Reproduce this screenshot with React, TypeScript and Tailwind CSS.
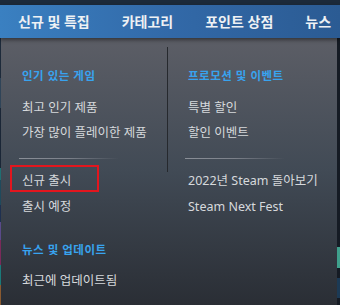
const font = { fontFamily: '"Noto Sans", "Noto Sans CJK KR", sans-serif' };

interface Column {
  title: string;
  top: string[];
  bottom: string[];
  extra?: { title: string; items: string[] };
}

const leftCol: Column = {
  title: '인기 있는 게임',
  top: ['최고 인기 제품', '가장 많이 플레이한 제품'],
  bottom: ['신규 출시', '출시 예정'],
  extra: { title: '뉴스 및 업데이트', items: ['최근에 업데이트됨'] },
};

const rightCol: Column = {
  title: '프로모션 및 이벤트',
  top: ['특별 할인', '할인 이벤트'],
  bottom: ['2022년 Steam 돌아보기', 'Steam Next Fest'],
};

function Header({ children }: { children: string }) {
  return (
    <div className="h-4 text-[11.5px] leading-4 font-bold tracking-[0.5px] text-[#38a3ef] whitespace-nowrap">
      {children}
    </div>
  );
}

function Item({ label, marked }: { label: string; marked?: boolean }) {
  return (
    <div className="relative h-[25px] text-[12.5px] leading-[25px] text-[#d6d9dc] whitespace-nowrap">
      {label}
      {marked && (
        <span className="absolute left-[-12px] top-[-3px] w-[89px] h-[27px] border-2 border-[#e3161e]" />
      )}
    </div>
  );
}

function MenuColumn({ col, className }: { col: Column; className: string }) {
  return (
    <div className={`pt-[21px] ${className}`}>
      <Header>{col.title}</Header>
      <div className="mt-[11px]">
        {col.top.map((t) => (
          <Item key={t} label={t} />
        ))}
      </div>
      <div className="mt-[13px] ml-[-3px] w-[100px] h-px bg-gradient-to-r from-[#8a8f97] via-[#7b8089] to-transparent" />
      <div className="mt-[9px] flex flex-col gap-px">
        {col.bottom.map((t) => (
          <Item key={t} label={t} marked={t === '신규 출시'} />
        ))}
      </div>
      {col.extra && (
        <>
          <div className="mt-[23px]">
            <Header>{col.extra.title}</Header>
          </div>
          <div className="mt-[10px]">
            {col.extra.items.map((t) => (
              <Item key={t} label={t} />
            ))}
          </div>
        </>
      )}
    </div>
  );
}

export default function App() {
  return (
    <div className="w-[340px] h-[305px] overflow-hidden flex flex-col bg-[#1b2838]" style={font}>
      <div className="h-[5px] bg-[#1c2a3a]" />
      {/* nav */}
      <nav className="relative z-10 h-[33px] flex items-center gap-[32px] pl-[18px] bg-gradient-to-r from-[#3a80c1] via-[#3269a8] to-[#2b5b93] shadow-[0_2px_4px_rgba(0,0,0,0.45)]">
        {['신규 및 특집', '카테고리', '포인트 상점', '뉴스'].map((n) => (
          <span key={n} className="text-[14px] font-bold text-[#eef1f4] whitespace-nowrap">
            {n}
          </span>
        ))}
      </nav>

      <div className="flex flex-1">
        {/* page edge behind the menu */}
        <div className="w-px flex flex-col">
          <div className="h-[40px] bg-[#1d2a3a]" />
          <div className="h-[30px] bg-[#2f4458]" />
          <div className="h-[60px] bg-[#1a2636]" />
          <div className="h-[12px] bg-[#1f6f72]" />
          <div className="h-[25px] bg-[#1f4a5c]" />
          <div className="h-[17px] bg-[#1e3050]" />
          <div className="h-[18px] bg-[#5a4a8a]" />
          <div className="h-[25px] bg-[#7a2a5a]" />
          <div className="h-[20px] bg-[#1a7a7a]" />
          <div className="flex-1 bg-[#8a5a30]" />
        </div>

        {/* dropdown panel */}
        <div className="w-[336px] pt-[9px] flex bg-gradient-to-b from-[#5c5e66] via-[#414a55] to-[#2a2e35]">
          <MenuColumn col={leftCol} className="w-[166px] pl-[21px]" />
          <div className="w-px h-[125px] bg-[#26292e]" />
          <MenuColumn col={rightCol} className="pl-[20px]" />
        </div>

        <div className="flex-1 flex flex-col bg-[#151b24]">
          <div className="h-[209px]" />
          <div className="h-[21px] bg-[#3fa08c]" />
          <div className="h-[10px]" />
          <div className="h-[20px] bg-[#1c3a55]" />
        </div>
      </div>
    </div>
  );
}
